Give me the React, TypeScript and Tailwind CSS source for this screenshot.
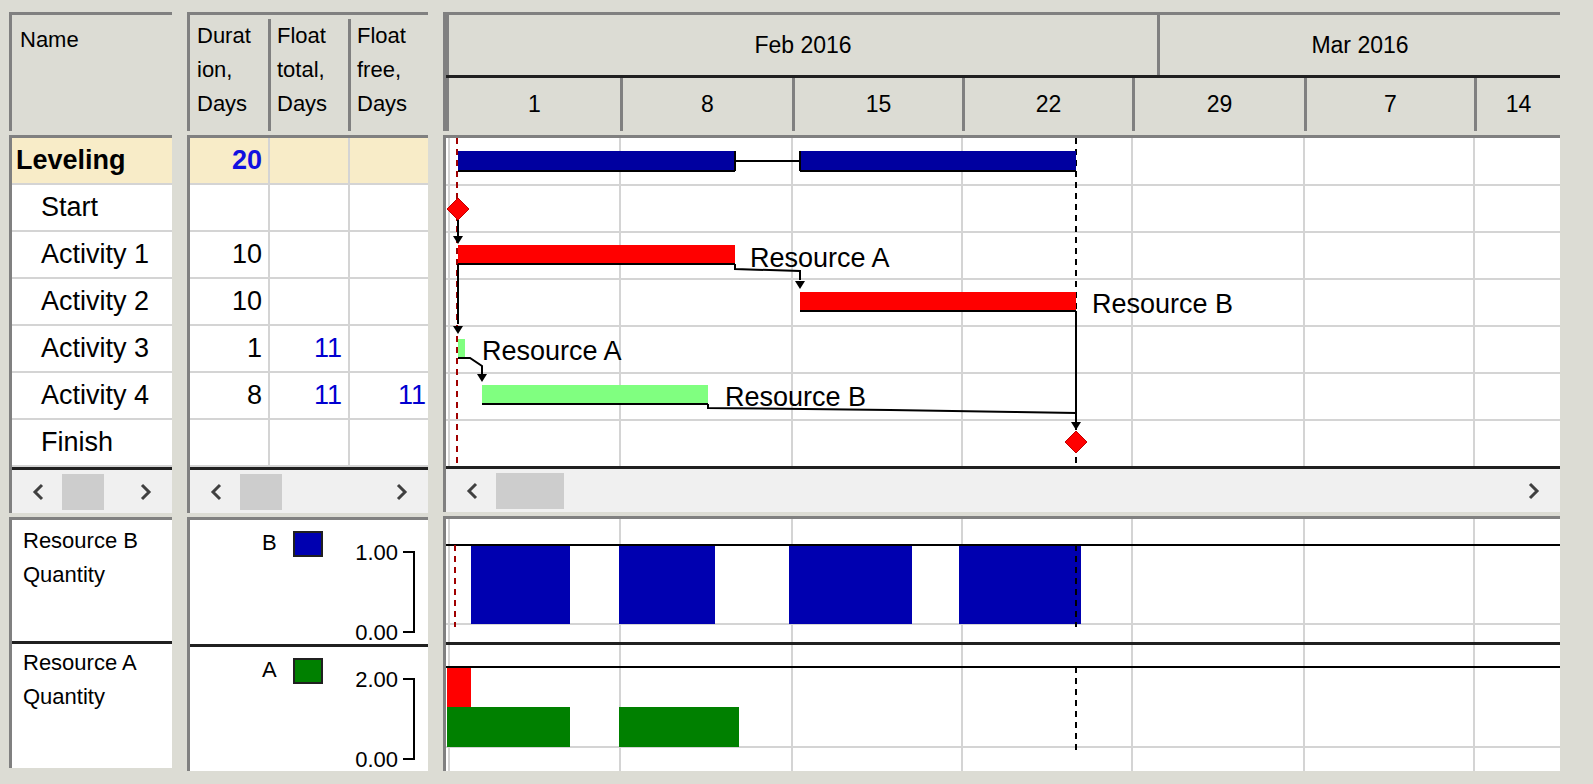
const F = { fontFamily: '"Liberation Sans", Arial, sans-serif' };

const rows = [
  { name: "Leveling", dur: "20", ft: "", ff: "", bold: true },
  { name: "Start", dur: "", ft: "", ff: "" },
  { name: "Activity 1", dur: "10", ft: "", ff: "" },
  { name: "Activity 2", dur: "10", ft: "", ff: "" },
  { name: "Activity 3", dur: "1", ft: "11", ff: "" },
  { name: "Activity 4", dur: "8", ft: "11", ff: "11" },
  { name: "Finish", dur: "", ft: "", ff: "" },
];

const weekX = [620, 792, 962, 1132, 1304, 1474];
const rowY = [181, 228, 275, 322, 369, 416];

function Chev({ dir }: { dir: "l" | "r" }) {
  return (
    <svg width="16" height="18" viewBox="0 0 16 18">
      <path d={dir === "l" ? "M12 2 L5 9 L12 16" : "M4 2 L11 9 L4 16"} fill="none" stroke="#404040" strokeWidth="3" />
    </svg>
  );
}

function Scroll({ thumbLeft, thumbW = 42 }: { thumbLeft: number; thumbW?: number }) {
  return (
    <div className="h-[46px] bg-[#f0f0f0] border-t-[3px] border-[#202020] flex items-center px-[18px] relative">
      <Chev dir="l" />
      <div className="h-[36px] bg-[#cdcdcd]" style={{ marginLeft: thumbLeft, width: thumbW }} />
      <div className="flex-1" />
      <Chev dir="r" />
    </div>
  );
}

function Arrow({ x, y }: { x: number; y: number }) {
  return <path d={`M${x - 5} ${y - 8} L${x + 5} ${y - 8} L${x} ${y} Z`} fill="#000" />;
}

function Bar({ x1, x2, y, c }: { x1: number; x2: number; y: number; c: string }) {
  return (
    <g>
      <rect x={x1} y={y} width={x2 - x1} height={19} fill={c} />
      <line x1={x1} y1={y + 19} x2={x2} y2={y + 19} stroke="#000" strokeWidth="2" />
    </g>
  );
}

function Diamond({ x, y }: { x: number; y: number }) {
  return <path d={`M${x} ${y - 11} L${x + 11} ${y} L${x} ${y + 11} L${x - 11} ${y} Z`} fill="#ff0000" stroke="#c00000" strokeWidth="1" />;
}

function GridV({ y1, y2 }: { y1: number; y2: number }) {
  return (
    <g>
      <line x1={449} y1={y1} x2={449} y2={y2} stroke="#d4d4d4" strokeWidth="2" />
      {weekX.map((x) => (
        <line key={x} x1={x} y1={y1} x2={x} y2={y2} stroke="#d4d4d4" strokeWidth="2" />
      ))}
    </g>
  );
}

function ChartBody() {
  return (
    <svg width="1114" height="330" className="block" style={F}>
      <g transform="translate(-446,-134)">
        <rect x="446" y="134" width="1114" height="330" fill="#fff" />
        <GridV y1={134} y2={464} />
        {rowY.map((y) => (
          <line key={y} x1={446} y1={y} x2={1560} y2={y} stroke="#d4d4d4" strokeWidth="2" />
        ))}
        <line x1={457} y1={134} x2={457} y2={464} stroke="#a00000" strokeWidth="2" strokeDasharray="6 5" />
        <line x1={1076} y1={134} x2={1076} y2={464} stroke="#000" strokeWidth="2" strokeDasharray="6 5" />
        <rect x={458} y={147} width={277} height={20} fill="#0000a0" />
        <rect x={800} y={147} width={276} height={20} fill="#0000a0" />
        <line x1={735} y1={157} x2={800} y2={157} stroke="#000" strokeWidth="2" />
        <line x1={735} y1={147} x2={735} y2={167} stroke="#000" strokeWidth="2" />
        <line x1={800} y1={147} x2={800} y2={167} stroke="#000" strokeWidth="2" />
        <line x1={458} y1={167} x2={735} y2={167} stroke="#000" strokeWidth="2" />
        <line x1={800} y1={167} x2={1076} y2={167} stroke="#000" strokeWidth="2" />
        <g stroke="#000" strokeWidth="2" fill="none">
          <path d="M458 214 L458 232" />
          <path d="M458 260 L458 320" />
          <path d="M735 260 L735 265 L800 267 L800 276" />
          <path d="M465 354 L470 354 L482 362 L482 370" />
          <path d="M708 400 L708 404 L890 406 L1015 408 L1076 409 L1076 420" />
          <path d="M1076 307 L1076 420" />
        </g>
        <Arrow x={458} y={240} />
        <Arrow x={458} y={330} />
        <Arrow x={800} y={285} />
        <Arrow x={482} y={378} />
        <Arrow x={1076} y={426} />
        <Diamond x={458} y={205} />
        <Bar x1={458} x2={735} y={241} c="#ff0000" />
        <Bar x1={800} x2={1076} y={288} c="#ff0000" />
        <Bar x1={458} x2={465} y={335} c="#80ff80" />
        <Bar x1={482} x2={708} y={381} c="#80ff80" />
        <Diamond x={1076} y={438} />
        <g fontSize="27" fill="#000">
          <text x={750} y={263}>Resource A</text>
          <text x={1092} y={309}>Resource B</text>
          <text x={482} y={356}>Resource A</text>
          <text x={725} y={402}>Resource B</text>
        </g>
      </g>
    </svg>
  );
}

function ResChart({ kind }: { kind: "B" | "A" }) {
  const y0 = kind === "B" ? 514 : 640;
  const h = 126;
  return (
    <svg width="1114" height={h} className="block">
      <g transform={`translate(-446,-${y0})`}>
        <rect x="446" y={y0} width="1114" height={h} fill="#fff" />
        <GridV y1={y0} y2={y0 + h} />
        {kind === "B" ? (
          <>
            <line x1={446} y1={540} x2={1560} y2={540} stroke="#000" strokeWidth="2" />
            <line x1={446} y1={619} x2={1560} y2={619} stroke="#d4d4d4" strokeWidth="2" />
            <line x1={455} y1={540} x2={455} y2={622} stroke="#a00000" strokeWidth="2" strokeDasharray="6 5" />
            {[[471, 570], [619, 715], [789, 912], [959, 1081]].map(([a, b]) => (
              <rect key={a} x={a} y={541} width={b - a} height={78} fill="#0000b0" />
            ))}
            <line x1={1076} y1={540} x2={1076} y2={622} stroke="#000" strokeWidth="2" strokeDasharray="6 5" />
          </>
        ) : (
          <>
            <line x1={446} y1={662} x2={1560} y2={662} stroke="#000" strokeWidth="2" />
            <line x1={446} y1={742} x2={1560} y2={742} stroke="#d4d4d4" strokeWidth="2" />
            <rect x={447} y={663} width={24} height={39} fill="#ff0000" />
            <rect x={447} y={702} width={123} height={40} fill="#008000" />
            <rect x={619} y={702} width={120} height={40} fill="#008000" />
            <line x1={1076} y1={662} x2={1076} y2={746} stroke="#000" strokeWidth="2" strokeDasharray="6 5" />
          </>
        )}
      </g>
    </svg>
  );
}

function ResLegend({ letter, color, top }: { letter: string; color: string; top: string }) {
  return (
    <svg width="238" height="124" className="block" style={F}>
      <rect width="238" height="124" fill="#fff" />
      <text x="72" y="30" fontSize="22" fill="#000">{letter}</text>
      <rect x="104" y="12" width="28" height="24" fill={color} stroke="#202020" strokeWidth="2" />
      <text x="208" y="40" fontSize="22" textAnchor="end" fill="#000">{top}</text>
      <text x="208" y="120" fontSize="22" textAnchor="end" fill="#000">0.00</text>
      <path d="M213 32 L224 32 L224 112 L213 112" fill="none" stroke="#000" strokeWidth="2" />
    </svg>
  );
}

const pane = "bg-white border-l-[3px] border-t-[3px] border-[#808080]";

export default function App() {
  return (
    <div className="w-[1593px] h-[784px] bg-[#dcdcd4] pt-[12px] pl-[9px] overflow-hidden text-black" style={F}>
      <div className="flex gap-[15px]">
        {/* Names */}
        <div className="w-[163px] flex flex-col gap-[4px]">
          <div className="h-[119px] bg-[#dcdcd4] border-l-[3px] border-t-[3px] border-[#808080] px-[8px] pt-[8px] text-[22px]">Name</div>
          <div className={`${pane} flex flex-col`}>
            {rows.map((r, i) => (
              <div
                key={r.name}
                className={`h-[47px] flex items-center text-[27px] border-b-2 border-[#d4d4d4] last:border-b-0 ${
                  i === 0 ? "bg-[#f8ecc8] font-bold pl-[4px]" : "pl-[29px]"
                }`}
              >
                {r.name}
              </div>
            ))}
            <Scroll thumbLeft={16} />
          </div>
          <div className={`${pane} flex flex-col`}>
            <div className="h-[124px] px-[11px] pt-[4px] text-[22px] leading-[34px] border-b-[3px] border-[#202020]">
              Resource B<br />Quantity
            </div>
            <div className="h-[124px] px-[11px] pt-[2px] text-[22px] leading-[34px]">
              Resource A<br />Quantity
            </div>
          </div>
        </div>
        {/* Values */}
        <div className="w-[241px] flex flex-col gap-[4px]">
          <div className="h-[119px] bg-[#dcdcd4] border-l-[3px] border-t-[3px] border-[#808080] flex text-[22px] leading-[34px] pt-[4px]">
            <div className="w-[78px] pl-[7px]">Durat<br />ion,<br />Days</div>
            <div className="w-[80px] pl-[6px] border-l-[3px] border-[#808080]">Float<br />total,<br />Days</div>
            <div className="flex-1 pl-[6px] border-l-[3px] border-[#808080]">Float<br />free,<br />Days</div>
          </div>
          <div className={`${pane} flex flex-col`}>
            {rows.map((r, i) => (
              <div key={r.name} className={`h-[47px] flex text-[27px] border-b-2 border-[#d4d4d4] last:border-b-0 ${i === 0 ? "bg-[#f8ecc8] font-bold" : ""}`}>
                <div className={`w-[78px] flex items-center justify-end pr-[6px] ${i === 0 ? "text-[#1010e0]" : ""}`}>{r.dur}</div>
                <div className="w-[80px] flex items-center justify-end pr-[6px] text-[#0000d0] border-l-2 border-[#d4d4d4]">{r.ft}</div>
                <div className="flex-1 flex items-center justify-end pr-[2px] text-[#0000d0] border-l-2 border-[#d4d4d4]">{r.ff}</div>
              </div>
            ))}
            <Scroll thumbLeft={16} />
          </div>
          <div className={`${pane} flex flex-col`}>
            <div className="border-b-[3px] border-[#202020]">
              <ResLegend letter="B" color="#0000b0" top="1.00" />
            </div>
            <ResLegend letter="A" color="#008000" top="2.00" />
          </div>
        </div>
        {/* Chart */}
        <div className="w-[1117px] flex flex-col gap-[4px]">
          <div className="h-[119px] bg-[#dcdcd4] border-l-[3px] border-t-[3px] border-[#808080] flex flex-col text-[23px]">
            <div className="h-[63px] flex border-b-[3px] border-[#202020]">
              <div className="w-[711px] flex items-center justify-center border-l-[3px] border-[#808080]">Feb 2016</div>
              <div className="flex-1 flex items-center justify-center border-l-[3px] border-[#808080]">Mar 2016</div>
            </div>
            <div className="flex-1 flex">
              {[["1", 174], ["8", 172], ["15", 170], ["22", 170], ["29", 172], ["7", 170], ["14", 86]].map(([d, w]) => (
                <div key={d as string} className="flex items-center justify-center border-l-[3px] border-[#808080]" style={{ width: w as number }}>
                  {d}
                </div>
              ))}
            </div>
          </div>
          <div className={`${pane} flex flex-col overflow-hidden`}>
            <div className="h-[328px] overflow-hidden"><ChartBody /></div>
            <Scroll thumbLeft={16} thumbW={68} />
          </div>
          <div className={`${pane} flex flex-col overflow-hidden`}>
            <div className="border-b-[3px] border-[#202020] h-[126px] overflow-hidden"><ResChart kind="B" /></div>
            <ResChart kind="A" />
          </div>
        </div>
      </div>
    </div>
  );
}
